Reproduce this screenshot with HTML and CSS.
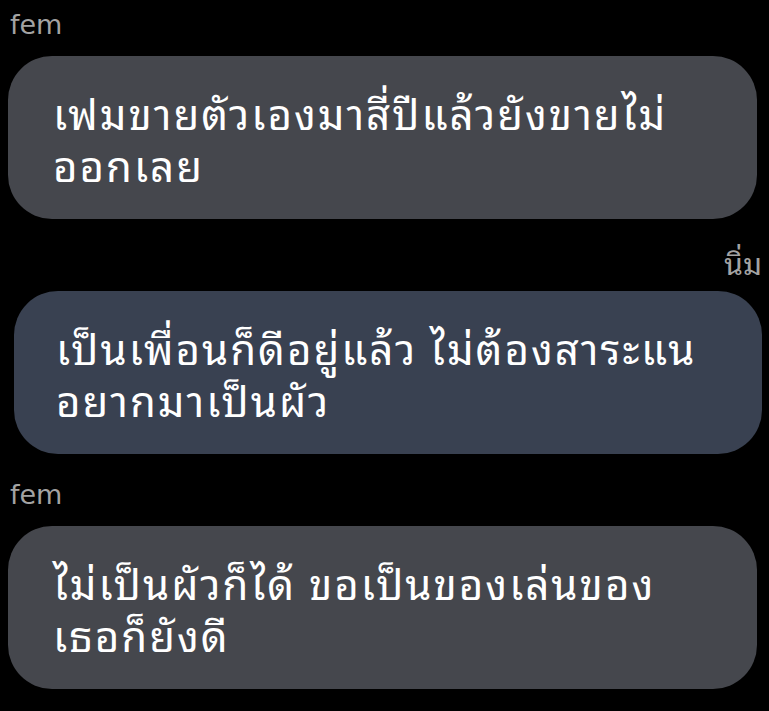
FILE: index.html
```html
<!DOCTYPE html>
<html lang="th">
<head>
  <meta charset="UTF-8">
  <meta name="viewport" content="width=device-width, initial-scale=1.0">
  <title>แชท</title>
  <link rel="stylesheet" href="styles.css">
</head>
<body>
  <div class="chat">
    <div class="group">
      <div class="label">fem</div>
      <div class="bubble">เฟมขายตัวเองมาสี่ปีแล้วยังขายไม่<br>ออกเลย</div>
    </div>

    <div class="group me">
      <div class="label label-th">นิ่ม</div>
      <div class="bubble">เป็นเพื่อนก็ดีอยู่แล้ว ไม่ต้องสาระแน<br>อยากมาเป็นผัว</div>
    </div>

    <div class="group">
      <div class="label">fem</div>
      <div class="bubble">ไม่เป็นผัวก็ได้ ขอเป็นของเล่นของ<br>เธอก็ยังดี</div>
    </div>

    <div class="group me">
      <div class="label label-th">นิ่ม</div>
    </div>
  </div>
</body>
</html>
```

FILE: styles.css
```css
html, body {
  margin: 0;
  padding: 0;
  background-color: #000;
  height: 100%;
  overflow: hidden;
}

body {
  font-family: "Noto Sans Thai Looped", "Noto Sans Thai", "Noto Sans", "DejaVu Sans", sans-serif;
}

.chat {
  margin-top: -16px;
}

.group {
  display: flex;
  flex-direction: column;
  align-items: flex-start;
  padding: 0 12px 0 8px;
}

.group.me {
  align-items: flex-end;
  padding: 0 7px 0 14px;
}

.label {
  height: 72px;
  box-sizing: border-box;
  display: flex;
  align-items: flex-end;
  padding: 0 2px 16px;
  color: #a3a3a3;
  font-family: "DejaVu Sans", sans-serif;
  font-size: 27px;
  line-height: 30px;
}

.label-th {
  font-family: "Noto Sans Thai Looped", "Noto Sans Thai", "Noto Sans", sans-serif;
  font-size: 30px;
  padding: 0 0 14px;
}

.bubble {
  align-self: stretch;
  background-color: #45474d;
  color: #fff;
  border-radius: 44px;
  padding: 29px 30px 30px 45px;
  font-size: 42px;
  line-height: 52px;
  letter-spacing: 2px;
}

.me .bubble {
  background-color: #394151;
  padding-left: 42px;
}
```
